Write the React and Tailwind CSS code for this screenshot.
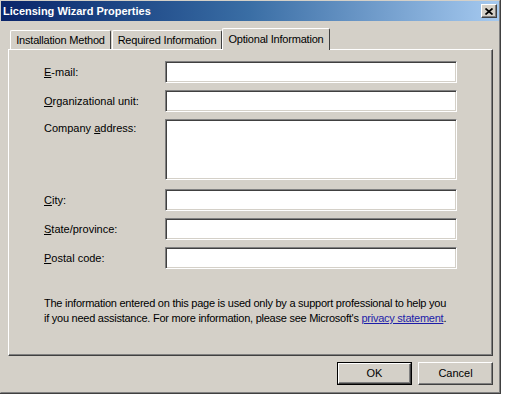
const font = "font-['Liberation_Sans',Arial,sans-serif]";

const raised =
  "border border-t-white border-l-white border-r-[#404040] border-b-[#404040] shadow-[inset_-1px_-1px_0_#808080]";
const sunken =
  "border border-t-[#808080] border-l-[#808080] border-r-white border-b-white shadow-[inset_1px_1px_0_#404040,inset_-1px_-1px_0_#d4d0c8]";

const Field = ({ label, hot, rest, tall, extraTop }) => (
  <>
    <div className={`text-[11px] leading-[13px] text-black ${tall ? "pt-[3px]" : "self-center"} ${extraTop ? "mt-[2px]" : ""}`}>
      {label}
      <span className="underline underline-offset-[1px]">{hot}</span>
      {rest}
    </div>
    <div className={`bg-white ${sunken} ${tall ? "h-[61px]" : "h-[22px]"} ${extraTop ? "mt-[2px]" : ""}`} />
  </>
);

const Tab = ({ children, active, className = "" }) => (
  <div
    className={`flex items-center justify-center whitespace-nowrap text-[11px] tracking-[-0.2px] text-black border-t border-l border-r border-t-white border-l-white border-r-[#404040] rounded-t-[2px] bg-[#d4d0c8] ${
      active ? "h-[22px] relative z-10 -mb-[1px] pb-[1px]" : "h-[19px]"
    } ${className}`}
  >
    {children}
  </div>
);

export default function App() {
  return (
    <div className={`min-h-screen bg-white ${font}`}>
      <div className="w-[501px] h-[394px] bg-[#d4d0c8] border-r border-b border-[#404040] flex flex-col">
        <div className="flex-1 flex flex-col border-t border-l border-t-[#d4d0c8] border-l-[#d4d0c8] border-r border-b border-r-[#808080] border-b-[#808080]">
          {/* title bar */}
          <div className="h-[20px] flex items-center justify-between pl-[2px] pr-[2px] bg-gradient-to-r from-[#0a246a] via-[#3a6ea5] to-[#a6caf0]">
            <span className="text-white font-bold text-[11px] leading-none">Licensing Wizard Properties</span>
            <div className={`w-[16px] h-[14px] bg-[#d4d0c8] flex items-center justify-center ${raised}`}>
              <svg width="8" height="7" viewBox="0 0 8 7">
                <path d="M0.5 0.5 L7.5 6.5 M7.5 0.5 L0.5 6.5" stroke="#000" strokeWidth="1.7" />
              </svg>
            </div>
          </div>

          {/* tabs */}
          <div className="mt-[7px] ml-[9px] flex items-end">
            <Tab className="w-[101px]">Installation Method</Tab>
            <Tab className="w-[110px] ml-[1px]">Required Information</Tab>
            <Tab active className="w-[108px]">Optional Information</Tab>
          </div>

          {/* panel */}
          <div className={`ml-[7px] w-[485px] h-[307px] ${raised} pt-[11px] pl-[35px]`}>
            <div className="grid grid-cols-[121px_292px] gap-y-[7px]">
              <Field hot="E" rest="-mail:" />
              <Field hot="O" rest="rganizational unit:" />
              <Field label="Company " hot="a" rest="ddress:" tall />
              <Field hot="C" rest="ity:" extraTop />
              <Field hot="S" rest="tate/province:" />
              <Field hot="P" rest="ostal code:" />
            </div>
            <p className="mt-[27px] text-[11px] leading-[15px] tracking-[-0.25px] text-black whitespace-nowrap">
              The information entered on this page is used only by a support professional to help you
              <br />
              if you need assistance. For more information, please see Microsoft's{" "}
              <span className="text-[#1c1ca8] underline">privacy statement</span>.
            </p>
          </div>

          {/* buttons */}
          <div className="mt-[6px] ml-[7px] w-[485px] flex justify-end gap-[6px]">
            <div className="w-[75px] h-[23px] border border-black">
              <div className={`h-full flex items-center justify-center text-[11px] text-black ${raised}`}>OK</div>
            </div>
            <div className={`w-[75px] h-[23px] flex items-center justify-center text-[11px] text-black ${raised}`}>
              Cancel
            </div>
          </div>
        </div>
      </div>
    </div>
  );
}
